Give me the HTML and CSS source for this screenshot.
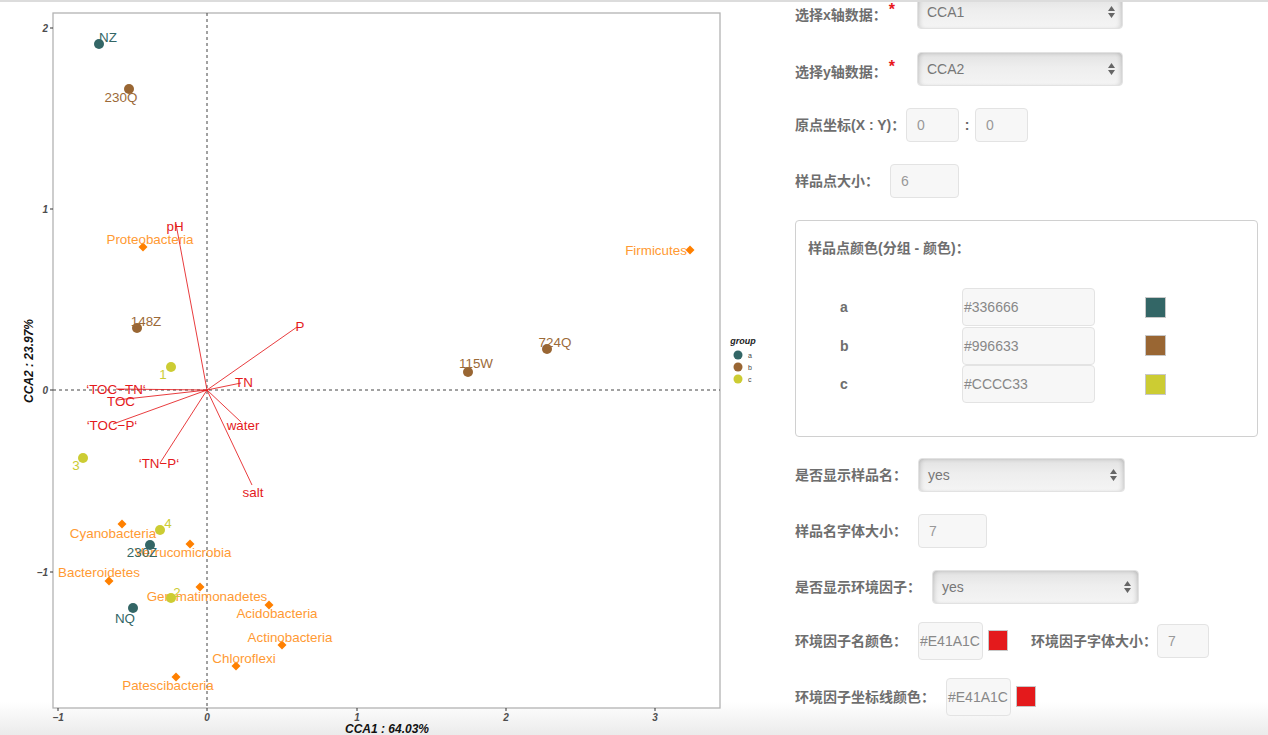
FILE: index.html
```html
<!DOCTYPE html>
<html lang="zh">
<head>
<meta charset="utf-8">
<title>CCA</title>
<link rel="stylesheet" href="styles.css">
</head>
<body>
<div class="topline"></div>
<div class="page">
  <div class="plot">
    <svg class="chart" width="780" height="735" viewBox="0 0 780 735" xmlns="http://www.w3.org/2000/svg">
      <rect x="53" y="13" width="667" height="695" fill="#fff" stroke="#b3b3b3" stroke-width="1.3"/>
      <line x1="207" y1="13" x2="207" y2="708" stroke="#444" stroke-width="1" stroke-dasharray="3,3"/>
      <line x1="53" y1="390" x2="720" y2="390" stroke="#444" stroke-width="1" stroke-dasharray="3,3"/>
      <g stroke="#333" stroke-width="1">
        <line x1="50" y1="28" x2="53" y2="28"/>
        <line x1="50" y1="209" x2="53" y2="209"/>
        <line x1="50" y1="390" x2="53" y2="390"/>
        <line x1="50" y1="572" x2="53" y2="572"/>
        <line x1="58" y1="708" x2="58" y2="711"/>
        <line x1="207" y1="708" x2="207" y2="711"/>
        <line x1="357" y1="708" x2="357" y2="711"/>
        <line x1="506" y1="708" x2="506" y2="711"/>
        <line x1="655" y1="708" x2="655" y2="711"/>
      </g>
      <g class="tick" text-anchor="end">
        <text x="48" y="32">2</text>
        <text x="48" y="213">1</text>
        <text x="48" y="394">0</text>
        <text x="48" y="576">−1</text>
      </g>
      <g class="tick" text-anchor="middle">
        <text x="58" y="721">−1</text>
        <text x="207" y="721">0</text>
        <text x="357" y="721">1</text>
        <text x="506" y="721">2</text>
        <text x="655" y="721">3</text>
      </g>
      <text class="axtitle" x="387" y="733" text-anchor="middle">CCA1 : 64.03%</text>
      <text class="axtitle" x="0" y="0" text-anchor="middle" transform="translate(33,361) rotate(-90)">CCA2 : 23.97%</text>

      <g fill="#ff8000">
        <path d="M143 242.5 L147.5 247 L143 251.5 L138.5 247 Z"/>
        <path d="M690 245.5 L694.5 250 L690 254.5 L685.5 250 Z"/>
        <path d="M122 519.5 L126.5 524 L122 528.5 L117.5 524 Z"/>
        <path d="M190 539.5 L194.5 544 L190 548.5 L185.5 544 Z"/>
        <path d="M109 576.5 L113.5 581 L109 585.5 L104.5 581 Z"/>
        <path d="M200 582.5 L204.5 587 L200 591.5 L195.5 587 Z"/>
        <path d="M269 600.5 L273.5 605 L269 609.5 L264.5 605 Z"/>
        <path d="M282 640.5 L286.5 645 L282 649.5 L277.5 645 Z"/>
        <path d="M236 661.5 L240.5 666 L236 670.5 L231.5 666 Z"/>
        <path d="M176 672.5 L180.5 677 L176 681.5 L171.5 677 Z"/>
      </g>
      <g class="lab" fill="#ff9a33" text-anchor="middle">
        <text x="150" y="244">Proteobacteria</text>
        <text x="656" y="255">Firmicutes</text>
        <text x="113" y="538">Cyanobacteria</text>
        <text x="183" y="557">Verrucomicrobia</text>
        <text x="99" y="577">Bacteroidetes</text>
        <text x="207" y="601">Gemmatimonadetes</text>
        <text x="277" y="618">Acidobacteria</text>
        <text x="290" y="642">Actinobacteria</text>
        <text x="244" y="663">Chloroflexi</text>
        <text x="168" y="690">Patescibacteria</text>
      </g>

      <g>
        <circle cx="99" cy="44" r="5" fill="#336666"/>
        <circle cx="150" cy="545" r="5" fill="#336666"/>
        <circle cx="133" cy="608" r="5" fill="#336666"/>
        <circle cx="129" cy="89" r="5" fill="#996633"/>
        <circle cx="137" cy="328" r="5" fill="#996633"/>
        <circle cx="468" cy="372" r="5" fill="#996633"/>
        <circle cx="547" cy="349" r="5" fill="#996633"/>
        <circle cx="171" cy="367" r="5" fill="#cccc33"/>
        <circle cx="83" cy="458" r="5" fill="#cccc33"/>
        <circle cx="160" cy="530" r="5" fill="#cccc33"/>
        <circle cx="171" cy="598" r="5" fill="#cccc33"/>
      </g>
      <g class="lab" text-anchor="middle">
        <text x="108" y="42" fill="#336666">NZ</text>
        <text x="142" y="557" fill="#336666">230Z</text>
        <text x="125" y="623" fill="#336666">NQ</text>
        <text x="121" y="102" fill="#9c6a38">230Q</text>
        <text x="146" y="326" fill="#9c6a38">148Z</text>
        <text x="476" y="368" fill="#9c6a38">115W</text>
        <text x="555" y="347" fill="#9c6a38">724Q</text>
        <text x="163" y="379" fill="#cccc33">1</text>
        <text x="76" y="470" fill="#cccc33">3</text>
        <text x="168" y="528" fill="#cccc33">4</text>
        <text x="177" y="597" fill="#cccc33">2</text>
      </g>

      <g stroke="#e41a1c" stroke-width="1" stroke-opacity="0.85">
        <line x1="207" y1="390" x2="176" y2="224"/>
        <line x1="207" y1="390" x2="297" y2="327"/>
        <line x1="207" y1="390" x2="241" y2="383"/>
        <line x1="207" y1="390" x2="241" y2="422"/>
        <line x1="207" y1="390" x2="252" y2="485"/>
        <line x1="207" y1="390" x2="160" y2="463"/>
        <line x1="207" y1="390" x2="113" y2="424"/>
        <line x1="207" y1="390" x2="117" y2="400"/>
        <line x1="207" y1="390" x2="116" y2="389"/>
      </g>
      <g class="lab" fill="#e41a1c" text-anchor="middle">
        <text x="175" y="231">pH</text>
        <text x="300" y="331">P</text>
        <text x="244" y="387">TN</text>
        <text x="243" y="430">water</text>
        <text x="253" y="497">salt</text>
        <text x="159" y="468">‘TN−P‘</text>
        <text x="112" y="430">‘TOC−P‘</text>
        <text x="121" y="406">TOC</text>
        <text x="116" y="394">‘TOC−TN‘</text>
      </g>

      <text class="legtitle" x="743" y="344" text-anchor="middle">group</text>
      <circle cx="738" cy="355" r="4.5" fill="#336666"/>
      <circle cx="738" cy="367" r="4.5" fill="#996633"/>
      <circle cx="738" cy="379" r="4.5" fill="#cccc33"/>
      <g class="leglab">
        <text x="748" y="357.5">a</text>
        <text x="748" y="369.5">b</text>
        <text x="748" y="381.5">c</text>
      </g>
    </svg>
  </div>

  <div class="form">
    <div class="row r-first">
      <div class="label lw122">选择x轴数据：<span class="req">*</span></div>
      <div class="select w206"><span>CCA1</span>
        <svg class="arr" width="7" height="12" viewBox="0 0 7 12"><path d="M3.5 0 L7 5 L0 5 Z M0 7 L7 7 L3.5 12 Z" fill="#666"/></svg>
      </div>
    </div>
    <div class="row r-second">
      <div class="label lw122">选择y轴数据：<span class="req">*</span></div>
      <div class="select w206"><span>CCA2</span>
        <svg class="arr" width="7" height="12" viewBox="0 0 7 12"><path d="M3.5 0 L7 5 L0 5 Z M0 7 L7 7 L3.5 12 Z" fill="#666"/></svg>
      </div>
    </div>
    <div class="row">
      <div class="label lw111">原点坐标(X : Y)：</div>
      <div class="input w53">0</div>
      <div class="sep">:</div>
      <div class="input w53">0</div>
    </div>
    <div class="row">
      <div class="label lw95">样品点大小：</div>
      <div class="input w69">6</div>
    </div>

    <div class="box">
      <div class="box-title">样品点颜色(分组 - 颜色)：</div>
      <div class="grp">
        <div class="grp-name">a</div>
        <div class="cinput">#336666</div>
        <div class="swatch sw-a"></div>
        <div class="grp-name">b</div>
        <div class="cinput">#996633</div>
        <div class="swatch sw-b"></div>
        <div class="grp-name">c</div>
        <div class="cinput">#CCCC33</div>
        <div class="swatch sw-c"></div>
      </div>
    </div>

    <div class="row r-afterbox">
      <div class="label lw123">是否显示样品名：</div>
      <div class="select w207"><span>yes</span>
        <svg class="arr" width="7" height="12" viewBox="0 0 7 12"><path d="M3.5 0 L7 5 L0 5 Z M0 7 L7 7 L3.5 12 Z" fill="#666"/></svg>
      </div>
    </div>
    <div class="row">
      <div class="label lw123">样品名字体大小：</div>
      <div class="input w69">7</div>
    </div>
    <div class="row">
      <div class="label lw137">是否显示环境因子：</div>
      <div class="select w207"><span>yes</span>
        <svg class="arr" width="7" height="12" viewBox="0 0 7 12"><path d="M3.5 0 L7 5 L0 5 Z M0 7 L7 7 L3.5 12 Z" fill="#666"/></svg>
      </div>
    </div>
    <div class="row crow">
      <div class="label lw123">环境因子名颜色：</div>
      <div class="cinput small">#E41A1C</div>
      <div class="swatch sw-red"></div>
      <div class="label lw126 ml23">环境因子字体大小：</div>
      <div class="input w52">7</div>
    </div>
    <div class="row crow">
      <div class="label lw151">环境因子坐标线颜色：</div>
      <div class="cinput small">#E41A1C</div>
      <div class="swatch sw-red"></div>
    </div>
  </div>
</div>
</body>
</html>
```

FILE: styles.css
```css
html {
  margin: 0;
  padding: 0;
  overflow: hidden;
  background: linear-gradient(#ffffff 0, #ffffff 702px, #ebebeb 735px);
  height: 735px;
}
body {
  margin: 0;
  padding: 0;
  overflow: hidden;
  font-family: "Liberation Sans", "Noto Sans CJK SC", sans-serif;
  width: 1268px;
  height: 735px;
}
.topline {
  position: fixed;
  left: 0;
  right: 0;
  top: 0;
  height: 2px;
  background: #dcdcdc;
  z-index: 5;
}
.page {
  display: flex;
  align-items: flex-start;
}
.plot {
  width: 780px;
  flex: none;
}
.chart {
  display: block;
}
.chart .tick {
  font-family: "Liberation Sans", sans-serif;
  font-size: 10px;
  font-weight: bold;
  font-style: italic;
  fill: #4d4d4d;
}
.chart .axtitle {
  font-family: "Liberation Sans", sans-serif;
  font-size: 12px;
  font-weight: bold;
  font-style: italic;
  fill: #111;
}
.chart .lab {
  font-family: "Liberation Sans", sans-serif;
  font-size: 13.4px;
}
.chart .legtitle {
  font-family: "Liberation Sans", sans-serif;
  font-size: 9px;
  font-weight: bold;
  font-style: italic;
  fill: #222;
}
.chart .leglab {
  font-family: "Liberation Sans", sans-serif;
  font-size: 7px;
  fill: #444;
}

.form {
  flex: none;
  width: 473px;
  padding-left: 15px;
  margin-top: -5px;
  display: flex;
  flex-direction: column;
}
.row {
  display: flex;
  align-items: center;
  height: 34px;
  margin-top: 22px;
}
.row.r-first { margin-top: 0; }
.row.r-second { margin-top: 23px; }
.row.r-afterbox { margin-top: 21px; }
.row.crow { height: 39px; margin-top: 17px; }

.label {
  flex: none;
  font-size: 14px;
  font-weight: bold;
  color: #6e6e6e;
  line-height: 20px;
  white-space: nowrap;
}
.lw95 { width: 95px; }
.lw111 { width: 111px; }
.lw122 { width: 122px; }
.lw123 { width: 123px; }
.lw126 { width: 126px; }
.lw137 { width: 137px; }
.lw151 { width: 151px; }
.ml23 { margin-left: 23px; }
.req {
  color: #e8181c;
  font-size: 16px;
  vertical-align: 5px;
  margin-left: 2px;
}

.select {
  flex: none;
  box-sizing: border-box;
  height: 34px;
  border: 1px solid #e2e2e2;
  border-radius: 4px;
  background: linear-gradient(#e2e2e2, #eeeeee 45%, #f4f4f4);
  box-shadow: inset 4px 0 4px -2px rgba(0,0,0,0.12), inset -4px 0 4px -2px rgba(0,0,0,0.12), inset 0 2px 3px rgba(0,0,0,0.06);
  display: flex;
  align-items: center;
  justify-content: space-between;
  padding: 0 7px 0 9px;
  font-size: 14px;
  color: #777;
}
.w206 { width: 206px; }
.w207 { width: 207px; }
.arr { display: block; }

.input {
  flex: none;
  box-sizing: border-box;
  height: 34px;
  border: 1px solid #e3e3e3;
  border-radius: 4px;
  background: #f7f7f7;
  font-size: 14px;
  color: #999;
  line-height: 32px;
  padding-left: 10px;
}
.w52 { width: 52px; }
.w53 { width: 53px; }
.w69 { width: 69px; }
.sep {
  flex: none;
  width: 16px;
  text-align: center;
  font-size: 14px;
  font-weight: bold;
  color: #666;
}

.cinput {
  box-sizing: border-box;
  height: 38px;
  border: 1px solid #e3e3e3;
  border-radius: 4px;
  background: #f7f7f7;
  font-size: 14px;
  color: #888;
  line-height: 36px;
  padding-left: 1px;
  white-space: nowrap;
  overflow: hidden;
}
.cinput.small {
  flex: none;
  width: 65px;
}
.swatch {
  flex: none;
  box-sizing: border-box;
  width: 21px;
  height: 21px;
  border: 1px solid #c8c8c8;
}
.row .swatch {
  width: 20px;
  height: 21px;
  margin-left: 5px;
}
.sw-a { background: #336666; }
.sw-b { background: #996633; }
.sw-c { background: #cccc33; }
.sw-red { background: #e41a1c; }

.box {
  margin-top: 22px;
  box-sizing: border-box;
  width: 463px;
  height: 217px;
  border: 1px solid #d0d0d0;
  border-radius: 4px;
  padding: 17px 12px 0 12px;
}
.box-title {
  font-size: 14px;
  font-weight: bold;
  color: #6e6e6e;
  line-height: 20px;
}
.grp {
  margin-top: 30px;
  margin-left: 32px;
  display: grid;
  grid-template-columns: 122px 183px 21px;
  grid-auto-rows: 38.5px;
  align-items: center;
}
.grp .cinput {
  width: 133px;
}
.grp-name {
  font-size: 14px;
  font-weight: bold;
  color: #6e6e6e;
}
```
